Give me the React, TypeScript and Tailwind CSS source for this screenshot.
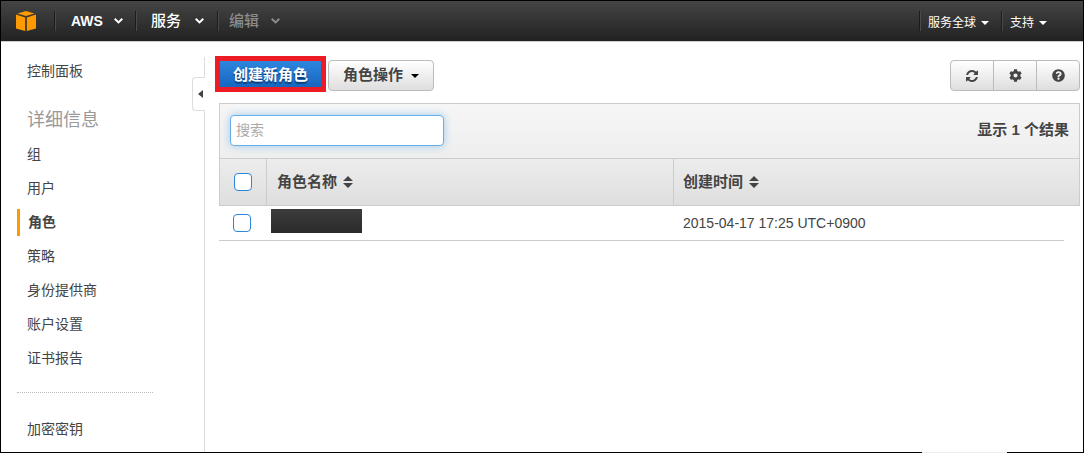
import { FaCog, FaQuestionCircle } from "react-icons/fa";

const FONT = "font-['Liberation_Sans','Noto_Sans_CJK_SC',sans-serif]";

function Logo() {
  return (
    <svg width="20" height="20" viewBox="0 0 20 20" fill="#ff9900" aria-hidden="true">
      <path d="M10 0 L18.5 2.4 L10 5 L1.5 2.4 Z" />
      <path d="M0 3.6 L9.2 6.4 V20 L0 17.4 Z" />
      <path d="M20 3.6 L10.8 6.4 V20 L20 17.4 Z" />
    </svg>
  );
}

function Chevron() {
  return (
    <svg width="9" height="6" viewBox="0 0 9 6" fill="none" stroke="currentColor" strokeWidth="2" aria-hidden="true">
      <path d="M0.7 0.8 L4.5 4.4 L8.3 0.8" />
    </svg>
  );
}

function Caret() {
  return (
    <svg width="8" height="4" viewBox="0 0 8 4" fill="currentColor" aria-hidden="true">
      <path d="M0 0 H8 L4 4 Z" />
    </svg>
  );
}

function SortArrows() {
  return (
    <svg width="10" height="12" viewBox="0 0 10 12" fill="#444444" aria-hidden="true">
      <path d="M5 0 L10 5 H0 Z M0 7 H10 L5 12 Z" />
    </svg>
  );
}

function RefreshIcon() {
  return (
    <svg width="12" height="12" viewBox="0 0 1536 1536" fill="currentColor" aria-hidden="true">
      <path d="M1511 928q0 5-1 7-64 268-268 434.5t-478 166.5q-146 0-282.5-55t-243.5-157l-129 129q-19 19-45 19t-45-19-19-45v-448q0-26 19-45t45-19h448q26 0 45 19t19 45-19 45l-137 137q71 66 161 102t187 36q134 0 250-65t186-179q11-17 53-117 8-23 30-23h192q13 0 22.5 9.5t9.5 22.5zm25-800v448q0 26-19 45t-45 19h-448q-26 0-45-19t-19-45 19-45l138-138q-148-137-349-137-134 0-250 65t-186 179q-11 17-53 117-8 23-30 23h-199q-13 0-22.5-9.5t-9.5-22.5v-7q65-268 270-434.5t480-166.5q146 0 284 55.5t245 156.5l130-129q19-19 45-19t45 19 19 45z" />
    </svg>
  );
}

function Divider() {
  return <span className="h-5 w-px bg-[#1c1c1c] shadow-[1px_0_0_#4a4a4a]" />;
}

function Header() {
  return (
    <header className="flex h-10 items-center bg-linear-to-b from-[#454545] to-[#222222] text-white [text-shadow:0_1px_1px_#000]">
      <a href="#home" aria-label="AWS" className="ml-[15px] pr-[18px]">
        <Logo />
      </a>
      <Divider />
      <nav className="flex items-center text-[15px] font-medium">
        <button type="button" className="flex items-center gap-[11px] pl-4 pr-3">
          <span className="text-sm font-bold">AWS</span>
          <Chevron />
        </button>
        <Divider />
        <button type="button" className="flex items-center gap-[14px] pl-[15px] pr-[13px]">
          服务
          <Chevron />
        </button>
        <Divider />
        <button type="button" className="flex items-center gap-3 px-[11px] text-[#8c8c8c]">
          编辑
          <Chevron />
        </button>
      </nav>
      <div className="ml-auto mr-7 flex items-center text-xs leading-6">
        <Divider />
        <button type="button" className="flex items-center gap-[5px] pl-2 pr-3 pt-[3px]">
          服务全球
          <Caret />
        </button>
        <Divider />
        <button type="button" className="flex items-center gap-[5px] px-2 pt-[3px]">
          支持
          <Caret />
        </button>
      </div>
    </header>
  );
}

const links = ["组", "用户", "角色", "策略", "身份提供商", "账户设置", "证书报告"];

function Sidebar() {
  return (
    <aside className="relative flex w-[204px] shrink-0 flex-col pl-4 pt-[15px] text-sm text-[#444444]">
      <a href="#dashboard" className="pl-[10px] leading-7">控制面板</a>
      <h2 className="mt-[17px] pl-[10px] text-lg leading-9 text-[#999999]">详细信息</h2>
      <ul className="mt-[3px] flex flex-col gap-[7px]">
        {links.map((label) => (
          <li key={label}>
            <a
              href={"#" + label}
              aria-current={label === "角色" ? "page" : undefined}
              className={
                label === "角色"
                  ? "block border-l-3 border-[#ff9900] pl-2 font-bold leading-[27px]"
                  : "block pl-[10px] leading-[27px]"
              }
            >
              {label}
            </a>
          </li>
        ))}
      </ul>
      <hr className="mr-[52px] mt-5 border-t border-dotted border-[#bbbbbb]" />
      <a href="#keys" className="mt-[22px] pl-[10px] leading-7">加密密钥</a>
      <div className="absolute bottom-0 right-0 top-[15px] border-r border-[#dddddd]" />
      <button
        type="button"
        aria-label="◀"
        className="absolute right-0 top-[35px] flex h-[34px] w-[13px] items-center justify-end rounded-l border border-r-0 border-[#dddddd] bg-white pr-[2px]"
      >
        <svg width="5" height="8" viewBox="0 0 5 8" fill="#444444" aria-hidden="true">
          <path d="M5 0 V8 L0 4 Z" />
        </svg>
      </button>
    </aside>
  );
}

function Toolbar() {
  return (
    <div className="flex items-end">
      <div className="-ml-1 border-5 border-[#ed1c24]">
        <button
          type="button"
          className="block h-[26px] bg-linear-to-b from-[#2e86dd] to-[#1666c0] px-[13px] text-[15px] font-bold leading-[27px] text-white [text-shadow:0_2px_1px_#0b3d77]"
        >
          创建新角色
        </button>
      </div>
      <button
        type="button"
        className="mb-px ml-[2px] flex h-[31px] items-center gap-2 rounded border border-[#bbbbbb] bg-linear-to-b from-white to-[#dedede] px-[14px] text-[15px] font-bold text-[#444444]"
      >
        角色操作
        <span className="text-black">
          <Caret />
        </span>
      </button>
      <div className="mb-px ml-auto flex h-[31px] divide-x divide-[#bbbbbb] overflow-hidden rounded border border-[#bbbbbb] bg-linear-to-b from-white to-[#dedede] text-[13px] text-[#444444]">
        <button type="button" aria-label="刷新" className="flex w-[43px] items-center justify-center">
          <RefreshIcon />
        </button>
        <button type="button" aria-label="设置" className="flex w-[43px] items-center justify-center">
          <FaCog />
        </button>
        <button type="button" aria-label="帮助" className="flex w-[42px] items-center justify-center">
          <FaQuestionCircle />
        </button>
      </div>
    </div>
  );
}

function Check({ label }: { label: string }) {
  return (
    <input
      type="checkbox"
      aria-label={label}
      className="block size-[18px] appearance-none rounded border border-[#2e86dd] bg-white checked:bg-[#2e86dd]"
    />
  );
}

function RolesTable() {
  return (
    <section className="mt-[11px]">
      <div className="flex h-[55px] items-center justify-between border border-b-0 border-[#cccccc] bg-linear-to-b from-[#f6f6f6] to-[#eeeeee] px-[10px] pb-[2px]">
        <input
          type="search"
          aria-label="搜索"
          placeholder="搜索"
          className="h-[31px] w-[214px] rounded border border-[#66afe9] bg-white px-[5px] text-sm text-[#444444] shadow-[0_0_8px_rgba(102,175,233,0.6)] outline-none placeholder:text-[#aaaaaa]"
        />
        <span className="text-[15px] font-bold text-[#444444]">显示 1 个结果</span>
      </div>
      <table className="w-full table-fixed border-separate border-spacing-0 text-left text-[#444444]">
        <colgroup>
          <col className="w-12" />
          <col className="w-[407px]" />
          <col />
          <col className="w-4" />
        </colgroup>
        <thead>
          <tr className="h-12 bg-linear-to-b from-[#ededed] to-[#dedede] text-[15px]">
            <th className="border border-[#cccccc] pl-[14px]">
              <Check label="全选" />
            </th>
            <th className="border-y border-r border-[#cccccc] pl-[10px]">
              <button type="button" className="flex items-center gap-[6px]">
                角色名称
                <SortArrows />
              </button>
            </th>
            <th className="border-y border-[#cccccc] pl-[9px]">
              <button type="button" className="flex items-center gap-[6px]">
                创建时间
                <SortArrows />
              </button>
            </th>
            <td className="border-y border-r border-[#cccccc]" />
          </tr>
        </thead>
        <tbody>
          <tr className="h-[35px] text-sm">
            <td className="border-b border-[#cccccc] pl-[14px]">
              <Check label="角色" />
            </td>
            <td className="border-b border-[#cccccc] pb-1 pl-1">
              <div className="h-6 w-[91px] bg-linear-to-b from-[#3c3c3c] to-[#2b2b2b]" />
            </td>
            <td className="border-b border-[#cccccc] pl-[9px]">2015-04-17 17:25 UTC+0900</td>
            <td />
          </tr>
        </tbody>
      </table>
    </section>
  );
}

export default function App() {
  return (
    <div className={"relative flex min-h-screen flex-col border border-black bg-white " + FONT}>
      <Header />
      <div className="flex grow border-t border-[#cccccc]">
        <Sidebar />
        <main className="min-w-0 grow pl-[14px] pr-[3px] pt-[14px]">
          <Toolbar />
          <RolesTable />
        </main>
      </div>
      <div className="absolute -bottom-px right-[76px] h-px w-[85px] bg-[#eeeeee]" />
    </div>
  );
}
